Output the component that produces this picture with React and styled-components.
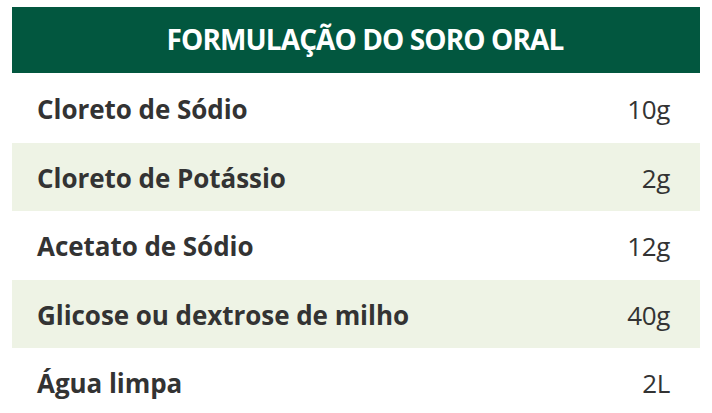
import React from "react";
import styled, { createGlobalStyle } from "styled-components";

const GlobalStyle = createGlobalStyle`
  html, body {
    margin: 0;
    padding: 0;
    background: #ffffff;
  }
  body {
    font-family: "Open Sans", "Liberation Sans", sans-serif;
  }
`;

const Page = styled.div`
  padding: 7px 12px 0 12px;
  width: 712px;
  height: 413px;
  box-sizing: border-box;
  overflow: hidden;
`;

const Table = styled.div`
  display: flex;
  flex-direction: column;
`;

const Header = styled.div`
  height: 66px;
  background: #02573f;
  color: #ffffff;
  display: flex;
  align-items: center;
  justify-content: center;
  font-size: 28px;
  font-weight: 700;
  letter-spacing: -0.9px;
  padding: 0 0 2px 18px;
  box-sizing: border-box;
`;

const Row = styled.div`
  height: ${(p) => p.$h}px;
  background: ${(p) => (p.$shade ? "#eef3e5" : "#ffffff")};
  display: flex;
  align-items: center;
  justify-content: space-between;
  padding: 1px 30px 0 25px;
  box-sizing: border-box;
  color: #333333;
`;

const Name = styled.span`
  font-size: 26px;
  font-weight: 700;
  letter-spacing: -0.05px;
`;

const Amount = styled.span`
  font-size: 26px;
  font-weight: 400;
  letter-spacing: -0.4px;
`;

const items = [
  { name: "Cloreto de Sódio", amount: "10g", h: 70 },
  { name: "Cloreto de Potássio", amount: "2g", h: 68 },
  { name: "Acetato de Sódio", amount: "12g", h: 69 },
  { name: "Glicose ou dextrose de milho", amount: "40g", h: 68 },
  { name: "Água limpa", amount: "2L", h: 69 },
];

export default function App() {
  return (
    <>
      <GlobalStyle />
      <Page>
        <Table>
          <Header>FORMULAÇÃO DO SORO ORAL</Header>
          {items.map((it, i) => (
            <Row key={it.name} $shade={i % 2 === 1} $h={it.h}>
              <Name>{it.name}</Name>
              <Amount>{it.amount}</Amount>
            </Row>
          ))}
        </Table>
      </Page>
    </>
  );
}
